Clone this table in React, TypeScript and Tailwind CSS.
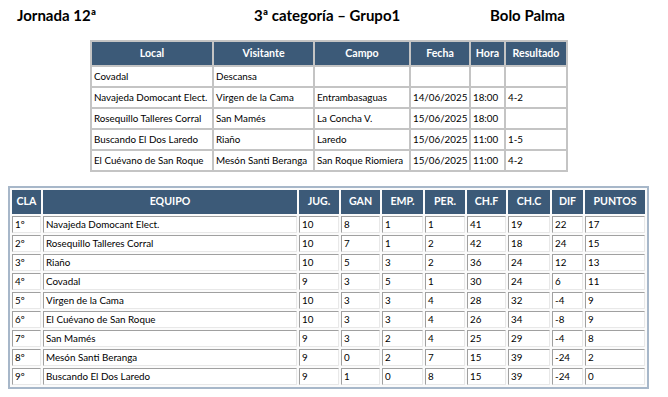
const PARTIDOS = [
  { local: "Covadal", visitante: "Descansa", campo: "", fecha: "", hora: "", resultado: "" },
  {
    local: "Navajeda Domocant Elect.",
    visitante: "Virgen de la Cama",
    campo: "Entrambasaguas",
    fecha: "14/06/2025",
    hora: "18:00",
    resultado: "4-2",
  },
  {
    local: "Rosequillo Talleres Corral",
    visitante: "San Mamés",
    campo: "La Concha V.",
    fecha: "15/06/2025",
    hora: "18:00",
    resultado: "",
  },
  {
    local: "Buscando El Dos Laredo",
    visitante: "Riaño",
    campo: "Laredo",
    fecha: "15/06/2025",
    hora: "11:00",
    resultado: "1-5",
  },
  {
    local: "El Cuévano de San Roque",
    visitante: "Mesón Santi Beranga",
    campo: "San Roque Riomiera",
    fecha: "15/06/2025",
    hora: "11:00",
    resultado: "4-2",
  },
];

const CLASIFICACION: (string | number)[][] = [
  ["1º", "Navajeda Domocant Elect.", 10, 8, 1, 1, 41, 19, 22, 17],
  ["2º", "Rosequillo Talleres Corral", 10, 7, 1, 2, 42, 18, 24, 15],
  ["3º", "Riaño", 10, 5, 3, 2, 36, 24, 12, 13],
  ["4º", "Covadal", 9, 3, 5, 1, 30, 24, 6, 11],
  ["5º", "Virgen de la Cama", 10, 3, 3, 4, 28, 32, -4, 9],
  ["6º", "El Cuévano de San Roque", 10, 3, 3, 4, 26, 34, -8, 9],
  ["7º", "San Mamés", 9, 3, 2, 4, 25, 29, -4, 8],
  ["8º", "Mesón Santi Beranga", 9, 0, 2, 7, 15, 39, -24, 2],
  ["9º", "Buscando El Dos Laredo", 9, 1, 0, 8, 15, 39, -24, 0],
];

const COLUMNAS_CLASIF = [
  { label: "CLA", w: "w-[29px]" },
  { label: "EQUIPO", w: "w-[254px]" },
  { label: "JUG.", w: "w-[40px]" },
  { label: "GAN", w: "w-[39px]" },
  { label: "EMP.", w: "w-[41px]" },
  { label: "PER.", w: "w-[40px]" },
  { label: "CH.F", w: "w-[39px]" },
  { label: "CH.C", w: "w-[42px]" },
  { label: "DIF", w: "w-[31px]" },
  { label: "PUNTOS", w: "w-[60px]" },
];

function Partidos() {
  const th =
    "border-2 border-[#c4c4c4] bg-[#3c5a78] text-white font-bold text-[10.6px] text-center h-[25px] p-0";
  const td = "border-2 border-[#c4c4c4] text-[9.8px] text-black text-left pl-[2px] h-[21px] p-0 whitespace-nowrap";

  return (
    <table className="ml-[90px] mt-[0px] w-[476px] table-fixed border-collapse">
      <thead>
        <tr>
          <th className={`${th} w-[122px]`}>Local</th>
          <th className={`${th} w-[101px]`}>Visitante</th>
          <th className={`${th} w-[96px]`}>Campo</th>
          <th className={`${th} w-[60px]`}>Fecha</th>
          <th className={`${th} w-[35px]`}>Hora</th>
          <th className={`${th} w-[62px]`}>Resultado</th>
        </tr>
      </thead>
      <tbody>
        {PARTIDOS.map((p) => (
          <tr key={p.local}>
            <td className={td}>{p.local}</td>
            <td className={td}>{p.visitante}</td>
            <td className={td}>{p.campo}</td>
            <td className={td}>{p.fecha}</td>
            <td className={td}>{p.hora}</td>
            <td className={td}>{p.resultado}</td>
          </tr>
        ))}
      </tbody>
    </table>
  );
}

function Clasificacion() {
  return (
    <table className="ml-[8px] mt-[14px] w-[641px] table-fixed border-separate border-spacing-[2px] border-2 border-[#a7b7c9] bg-[#fbfbfb]">
      <thead>
        <tr>
          {COLUMNAS_CLASIF.map((c) => (
            <th
              key={c.label}
              className={`${c.w} h-[24px] p-0 border border-[#3c5a78] bg-[#3c5a78] text-white font-bold text-[10.6px] text-center`}
            >
              {c.label}
            </th>
          ))}
        </tr>
      </thead>
      <tbody>
        {CLASIFICACION.map((fila) => (
          <tr key={fila[0]}>
            {fila.map((v, i) => (
              <td
                key={i}
                className="h-[17px] p-0 pl-[2px] border border-t-[#a0a0a0] border-l-[#a0a0a0] border-r-[#e8e8e8] border-b-[#e8e8e8] bg-white text-[9.8px] text-black text-left whitespace-nowrap"
              >
                {v}
              </td>
            ))}
          </tr>
        ))}
      </tbody>
    </table>
  );
}

export default function App() {
  return (
    <div className="w-[668px] h-[397px] bg-white font-['Lato',sans-serif]">
      <div className="flex h-[40px] pt-[5px] pl-[17px] text-[15px] leading-[20px] font-bold text-black">
        <div className="w-[237px]">Jornada 12ª</div>
        <div className="w-[236px]">3ª categoría – Grupo1</div>
        <div>Bolo Palma</div>
      </div>
      <Partidos />
      <Clasificacion />
    </div>
  );
}
